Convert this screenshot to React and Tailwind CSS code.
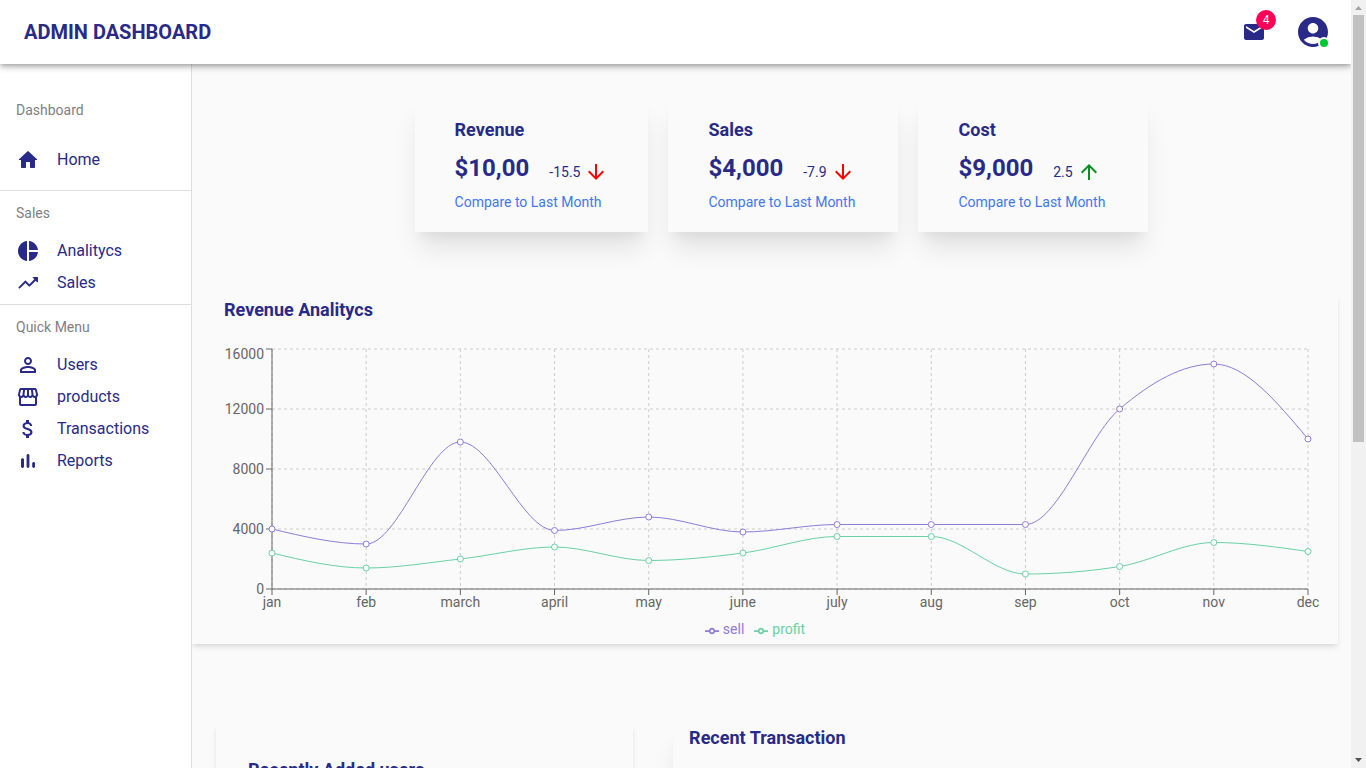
import { useEffect, useRef, useState } from "react";
import {
  MdAccountCircle,
  MdArrowDownward,
  MdArrowUpward,
  MdAttachMoney,
  MdMail,
  MdPieChart,
  MdStorefront,
} from "react-icons/md";

function PathIcon({ d }) {
  return (
    <svg viewBox="0 0 24 24" fill="currentColor" className="size-6" aria-hidden="true">
      <path d={d} />
    </svg>
  );
}

const HOME =
  "M10 19v-5h4v5c0 .55.45 1 1 1h3c.55 0 1-.45 1-1v-7h1.7c.46 0 .68-.57.33-.87L12.67 3.6c-.38-.34-.96-.34-1.34 0l-8.36 7.53c-.34.3-.13.87.33.87H5v7c0 .55.45 1 1 1h3c.55 0 1-.45 1-1z";
const TRENDING =
  "M16.85 6.85l1.44 1.44-4.88 4.88-3.29-3.29c-.39-.39-1.02-.39-1.41 0l-6 6.01c-.39.39-.39 1.02 0 1.41.39.39 1.02.39 1.41 0L9.41 12l3.29 3.29c.39.39 1.02.39 1.41 0l5.59-5.58 1.44 1.44c.31.31.85.09.85-.35V6.5c.01-.28-.21-.5-.49-.5h-4.29c-.45 0-.67.54-.36.85z";
const PERSON =
  "M12 6c1.1 0 2 .9 2 2s-.9 2-2 2-2-.9-2-2 .9-2 2-2m0 9c2.7 0 5.8 1.29 6 2v1H6v-.99c.2-.72 3.3-2.01 6-2.01m0-11C9.79 4 8 5.79 8 8s1.79 4 4 4 4-1.79 4-4-1.79-4-4-4zm0 9c-2.67 0-8 1.34-8 4v2c0 .55.45 1 1 1h14c.55 0 1-.45 1-1v-2c0-2.66-5.33-4-8-4z";
const BARS =
  "M6.4 9.2h.2c.77 0 1.4.63 1.4 1.4v7c0 .77-.63 1.4-1.4 1.4h-.2c-.77 0-1.4-.63-1.4-1.4v-7c0-.77.63-1.4 1.4-1.4zM12 5c.77 0 1.4.63 1.4 1.4v11.2c0 .77-.63 1.4-1.4 1.4-.77 0-1.4-.63-1.4-1.4V6.4c0-.77.63-1.4 1.4-1.4zm5.6 8c.77 0 1.4.63 1.4 1.4v3.2c0 .77-.63 1.4-1.4 1.4-.77 0-1.4-.63-1.4-1.4v-3.2c0-.77.63-1.4 1.4-1.4z";

function Header() {
  return (
    <header className="relative z-20 flex h-16 shrink-0 items-center justify-between bg-white pl-6 pr-5 shadow-[0_2px_4px_-1px_rgba(0,0,0,0.2),0_4px_5px_0_rgba(0,0,0,0.14),0_1px_10px_0_rgba(0,0,0,0.12)]">
      <h1 className="text-xl font-bold">ADMIN DASHBOARD</h1>
      <div className="flex items-center gap-[29px]">
        <button type="button" aria-label="Messages" className="relative">
          <MdMail className="size-6" />
          <span className="absolute -top-2.5 -right-2.5 flex size-5 items-center justify-center rounded-full bg-[#ff0057] text-xs font-normal text-white">
            4
          </span>
        </button>
        <button type="button" aria-label="Account" className="relative">
          <MdAccountCircle className="size-9" />
          <span className="absolute right-px bottom-px size-3 rounded-full border-2 border-white bg-[#00c832]" />
        </button>
      </div>
    </header>
  );
}

function NavItem({ icon, label }) {
  return (
    <li>
      <a href="#" className="flex h-8 items-center gap-[17px] px-4 text-base">
        {icon}
        {label}
      </a>
    </li>
  );
}

function NavLabel({ children }) {
  return <h2 className="flex h-11 items-center px-4 text-sm text-[#7f7f7f]">{children}</h2>;
}

function Sidebar() {
  return (
    <nav className="relative z-10 w-48 shrink-0 border-r border-[#dedede] bg-white pt-6">
      <section className="border-b border-[#dedede] pb-[14px]">
        <NavLabel>Dashboard</NavLabel>
        <ul className="pt-3">
          <NavItem icon={<PathIcon d={HOME} />} label="Home" />
        </ul>
      </section>
      <section className="border-b border-[#dedede] pb-[5px]">
        <NavLabel>Sales</NavLabel>
        <ul>
          <NavItem icon={<MdPieChart className="size-6" />} label="Analitycs" />
          <NavItem icon={<PathIcon d={TRENDING} />} label="Sales" />
        </ul>
      </section>
      <section>
        <NavLabel>Quick Menu</NavLabel>
        <ul>
          <NavItem icon={<PathIcon d={PERSON} />} label="Users" />
          <NavItem icon={<MdStorefront className="size-6" />} label="products" />
          <NavItem icon={<MdAttachMoney className="size-6" />} label="Transactions" />
          <NavItem icon={<PathIcon d={BARS} />} label="Reports" />
        </ul>
      </section>
    </nav>
  );
}

const XL_SHADOW = "shadow-[0_20px_25px_-5px_rgba(0,0,0,0.1),0_10px_10px_-5px_rgba(0,0,0,0.04)]";
const MD_SHADOW = "shadow-[0_4px_6px_-1px_rgba(0,0,0,0.1),0_2px_4px_-1px_rgba(0,0,0,0.06)]";

function StatCard({ title, value, change, up }) {
  return (
    <article className={`ml-5 min-w-[230px] bg-[#fafafa] px-10 py-5 ${XL_SHADOW}`}>
      <h3 className="text-lg leading-7 font-bold">{title}</h3>
      <div className="my-2 flex items-end gap-5">
        <span className="text-2xl leading-8 font-bold">{value}</span>
        <span className="flex items-center gap-1 text-sm leading-6">
          {change}
          {up ? (
            <MdArrowUpward className="size-6 text-[#00901f]" />
          ) : (
            <MdArrowDownward className="size-6 text-[#ff0000]" />
          )}
        </span>
      </div>
      <p className="text-sm leading-5 text-[#4277f0]">Compare to Last Month</p>
    </article>
  );
}

const MONTHS = ["jan", "feb", "march", "april", "may", "june", "july", "aug", "sep", "oct", "nov", "dec"];
const SERIES = [
  {
    name: "sell",
    color: "#8f7bd8",
    values: [4000, 3000, 9800, 3900, 4800, 3800, 4300, 4300, 4300, 12000, 15000, 10000],
  },
  {
    name: "profit",
    color: "#69d1a4",
    values: [2400, 1400, 2000, 2800, 1900, 2400, 3500, 3500, 1000, 1500, 3100, 2500],
  },
];
const MAX = 16000;
const TICKS = [0, 4000, 8000, 12000, 16000];
const TOP = 25;
const BOTTOM = 265;
const LEFT = 64;
const RIGHT_PAD = 14;

// Monotone cubic interpolation in x.
function monotonePath(points) {
  const n = points.length;
  const slope = (i) => (points[i + 1][1] - points[i][1]) / (points[i + 1][0] - points[i][0]);
  const tangents = new Array(n).fill(0);
  for (let i = 1; i < n - 1; i++) {
    const s0 = slope(i - 1);
    const s1 = slope(i);
    const p = (s0 + s1) / 2;
    tangents[i] = (Math.sign(s0) + Math.sign(s1)) * Math.min(Math.abs(s0), Math.abs(s1), 0.5 * Math.abs(p)) || 0;
  }
  tangents[0] = (3 * slope(0) - tangents[1]) / 2;
  tangents[n - 1] = (3 * slope(n - 2) - tangents[n - 2]) / 2;
  let d = `M${points[0][0]},${points[0][1]}`;
  for (let i = 0; i < n - 1; i++) {
    const [x0, y0] = points[i];
    const [x1, y1] = points[i + 1];
    const dx = (x1 - x0) / 3;
    d += `C${x0 + dx},${y0 + dx * tangents[i]},${x1 - dx},${y1 - dx * tangents[i + 1]},${x1},${y1}`;
  }
  return d;
}

function LineChart() {
  const ref = useRef(null);
  const [width, setWidth] = useState(1114);
  useEffect(() => {
    const observer = new ResizeObserver(([entry]) => setWidth(entry.contentRect.width));
    observer.observe(ref.current);
    return () => observer.disconnect();
  }, []);

  const right = width - RIGHT_PAD;
  const x = (i) => LEFT + ((right - LEFT) * i) / (MONTHS.length - 1);
  const y = (v) => BOTTOM - ((BOTTOM - TOP) * v) / MAX;

  return (
    <div ref={ref}>
      <svg width={width} height="291" className="block text-sm" role="img" aria-label="Sell and profit by month">
        <g stroke="#cccccc" strokeDasharray="3 3">
          {TICKS.map((t) => (
            <line key={t} x1={LEFT} x2={right} y1={y(t)} y2={y(t)} />
          ))}
          {MONTHS.map((m, i) => (
            <line key={m} x1={x(i)} x2={x(i)} y1={TOP} y2={BOTTOM} />
          ))}
        </g>
        <g stroke="#666666">
          <line x1={LEFT} x2={right} y1={BOTTOM} y2={BOTTOM} />
          <line x1={LEFT} x2={LEFT} y1={TOP} y2={BOTTOM} />
          {MONTHS.map((m, i) => (
            <line key={m} x1={x(i)} x2={x(i)} y1={BOTTOM} y2={BOTTOM + 6} />
          ))}
          {TICKS.map((t) => (
            <line key={t} x1={LEFT - 6} x2={LEFT} y1={y(t)} y2={y(t)} />
          ))}
        </g>
        <g fill="#666666">
          {MONTHS.map((m, i) => (
            <text key={m} x={x(i)} y={BOTTOM + 18} textAnchor="middle">
              {m}
            </text>
          ))}
          {TICKS.map((t) => (
            <text key={t} x={LEFT - 8} y={Math.max(y(t), TOP + 5) + 5} textAnchor="end">
              {t}
            </text>
          ))}
        </g>
        {SERIES.map((s) => (
          <g key={s.name} stroke={s.color}>
            <path d={monotonePath(s.values.map((v, i) => [x(i), y(v)]))} fill="none" />
            {s.values.map((v, i) => (
              <circle key={i} cx={x(i)} cy={y(v)} r="3" fill="#ffffff" />
            ))}
          </g>
        ))}
      </svg>
      <ul className="flex justify-center gap-2.5 pt-1 pr-5 text-sm leading-5">
        {SERIES.map((s) => (
          <li key={s.name} className="flex items-center gap-1" style={{ color: s.color }}>
            <svg viewBox="0 0 32 32" className="mt-1 size-3.5" fill="none" stroke="currentColor" strokeWidth="4">
              <path d="M0,16h10.67A5.33,5.33,0,1,1,21.33,16H32M21.33,16A5.33,5.33,0,1,1,10.67,16" />
            </svg>
            {s.name}
          </li>
        ))}
      </ul>
    </div>
  );
}

function Scrollbar() {
  return (
    <div aria-hidden="true" className="flex w-[15px] shrink-0 flex-col items-center bg-[#f1f1f1]">
      <svg viewBox="0 0 15 15" className="size-[15px] shrink-0" fill="#a3a3a3">
        <path d="M4 10h7L7.500 6z" />
      </svg>
      <div className="h-[55.6%] w-[11px] bg-[#c1c1c1]" />
      <svg viewBox="0 0 15 15" className="mt-auto size-[15px] shrink-0" fill="#505050">
        <path d="M4 5h7L7.500 9z" />
      </svg>
    </div>
  );
}

export default function App() {
  return (
    <div className="flex h-screen overflow-hidden bg-[#fafafa] font-[Roboto,sans-serif] text-[#292a88]">
      <div className="flex min-w-0 flex-1 flex-col overflow-hidden">
        <Header />
        <div className="flex min-h-0 flex-1">
          <Sidebar />
          <main className="min-w-0 flex-1 overflow-hidden pt-8">
            <section className="flex justify-center">
              <StatCard title="Revenue" value="$10,00" change="-15.5" />
              <StatCard title="Sales" value="$4,000" change="-7.9" />
              <StatCard title="Cost" value="$9,000" change="2.5" up />
            </section>
            <section className={`mt-16 mr-[13px] px-4 pb-[5px] ${MD_SHADOW}`}>
              <h3 className="px-4 text-lg leading-7 font-bold">Revenue Analitycs</h3>
              <LineChart />
            </section>
            <div className="mt-20 ml-6 flex h-96 gap-10">
              <section className={`w-[36.75%] shrink-0 p-8 ${MD_SHADOW}`}>
                <h3 className="text-lg leading-7 font-bold">Recently Added users</h3>
              </section>
              <section className={`flex-1 px-4 ${XL_SHADOW}`}>
                <h3 className="text-lg leading-7 font-bold">Recent Transaction</h3>
              </section>
            </div>
          </main>
        </div>
      </div>
      <Scrollbar />
    </div>
  );
}
